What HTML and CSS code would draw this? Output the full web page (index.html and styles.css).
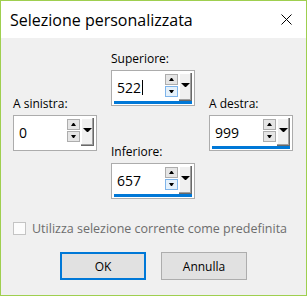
FILE: index.html
```html
<!DOCTYPE html>
<html lang="it">
<head>
    <meta charset="UTF-8">
    <title>Selezione personalizzata</title>
    <link rel="stylesheet" href="styles.css">
</head>
<body>
    <div class="dialog">
        <!-- Barra del titolo -->
        <div class="titlebar">
            <span class="title">Selezione personalizzata</span>
            <span class="close">
                <svg width="11" height="11" viewBox="0 0 11 11">
                    <path d="M0.5 0.5 L10.5 10.5 M10.5 0.5 L0.5 10.5" stroke="#000" stroke-width="1" fill="none"/>
                </svg>
            </span>
        </div>

        <div class="content">
            <div class="fields">
                <div class="col col-side">
                    <div class="field">
                        <label>A sinistra:</label>
                        <div class="spin">
                            <div class="spin-row">
                                <div class="value">0</div>
                                <div class="arrows">
                                    <span class="arrow-btn"><i class="tri-up"></i></span>
                                    <span class="arrow-btn"><i class="tri-down"></i></span>
                                </div>
                                <div class="drop"><i class="tri-drop"></i></div>
                            </div>
                            <div class="underline off"></div>
                        </div>
                    </div>
                </div>

                <div class="col col-mid">
                    <div class="field">
                        <label>Superiore:</label>
                        <div class="spin">
                            <div class="spin-row">
                                <div class="value">522<span class="caret"></span></div>
                                <div class="arrows">
                                    <span class="arrow-btn"><i class="tri-up"></i></span>
                                    <span class="arrow-btn hot"><i class="tri-down"></i></span>
                                </div>
                                <div class="drop"><i class="tri-drop"></i></div>
                            </div>
                            <div class="underline"></div>
                        </div>
                    </div>
                    <div class="field">
                        <label>Inferiore:</label>
                        <div class="spin">
                            <div class="spin-row">
                                <div class="value">657</div>
                                <div class="arrows">
                                    <span class="arrow-btn"><i class="tri-up"></i></span>
                                    <span class="arrow-btn hot"><i class="tri-down"></i></span>
                                </div>
                                <div class="drop"><i class="tri-drop"></i></div>
                            </div>
                            <div class="underline"></div>
                        </div>
                    </div>
                </div>

                <div class="col col-side">
                    <div class="field">
                        <label>A destra:</label>
                        <div class="spin">
                            <div class="spin-row">
                                <div class="value">999</div>
                                <div class="arrows">
                                    <span class="arrow-btn"><i class="tri-up"></i></span>
                                    <span class="arrow-btn"><i class="tri-down"></i></span>
                                </div>
                                <div class="drop"><i class="tri-drop"></i></div>
                            </div>
                            <div class="underline"></div>
                        </div>
                    </div>
                </div>
            </div>

            <div class="check">
                <span class="check-box"></span>
                <span>Utilizza selezione corrente come predefinita</span>
            </div>

            <div class="actions">
                <button class="btn btn-default">OK</button>
                <button class="btn">Annulla</button>
            </div>
        </div>
    </div>
</body>
</html>
```
FILE: styles.css
```css
body {
    margin: 0;
    font-family: "Open Sans", "Noto Sans", sans-serif;
    color: #000;
}

.dialog {
    width: 307px;
    height: 296px;
    box-sizing: border-box;
    border: 1px solid #9fcf4f;
    background-color: #f0f0f0;
    display: flex;
    flex-direction: column;
}

.titlebar {
    height: 37px;
    background-color: #fff;
    display: flex;
    align-items: center;
    justify-content: space-between;
    padding: 0 14px 0 9px;
}

.title {
    font-size: 16px;
    line-height: 20px;
}

.close {
    display: flex;
}

.content {
    padding: 13px 12px 0 12px;
}

.fields {
    display: flex;
    gap: 14px;
}

.col {
    display: flex;
    flex-direction: column;
}

.col-side {
    margin-top: 45px;
}

.col-mid {
    gap: 38px;
}

.field label {
    display: block;
    font-size: 12px;
    line-height: 16px;
    margin-bottom: 3px;
}

.spin {
    width: 84px;
    height: 36px;
    box-sizing: border-box;
    border: 1px solid #acacac;
    background-color: #fff;
    padding: 2px 2px 1px 2px;
    display: flex;
    flex-direction: column;
}

.spin-row {
    flex: 1;
    display: flex;
    gap: 1px;
}

.value {
    flex: 1;
    display: flex;
    align-items: center;
    padding-left: 3px;
    font-size: 14px;
}

.caret {
    display: inline-block;
    width: 1px;
    height: 15px;
    background-color: #000;
    margin-left: 1px;
}

.arrows {
    width: 13px;
    display: flex;
    flex-direction: column;
    gap: 1px;
    padding-top: 1px;
}

.arrow-btn {
    height: 11px;
    box-sizing: border-box;
    border: 1px solid #adadad;
    background-color: #e5e5e5;
    display: flex;
    align-items: center;
    justify-content: center;
}

.arrow-btn.hot {
    border-color: #7eb4ea;
    background-color: #e5f1fb;
}

.tri-up {
    width: 1px;
    border-left: 2px solid transparent;
    border-right: 2px solid transparent;
    border-bottom: 3px solid #000;
}

.tri-down {
    width: 1px;
    border-left: 2px solid transparent;
    border-right: 2px solid transparent;
    border-top: 3px solid #000;
}

.drop {
    width: 13px;
    box-sizing: border-box;
    background-color: #f0f0f0;
    border-right: 1px solid #696969;
    border-bottom: 1px solid #696969;
    box-shadow: inset -1px -1px 0 #a0a0a0, inset 1px 1px 0 #fff;
    display: flex;
    justify-content: center;
    align-items: flex-start;
    padding-top: 10px;
}

.tri-drop {
    width: 1px;
    border-left: 4px solid transparent;
    border-right: 4px solid transparent;
    border-top: 4px solid #000;
}

.underline {
    height: 3px;
    background-color: #0078d7;
}

.underline.off {
    background-color: transparent;
}

.check {
    display: flex;
    align-items: center;
    gap: 6px;
    margin-top: 21px;
    height: 16px;
    font-size: 12.5px;
    color: #6d6d6d;
}

.check-box {
    width: 13px;
    height: 13px;
    box-sizing: border-box;
    border: 1px solid #c4c4c4;
    background-color: #fcfcfc;
}

.actions {
    display: flex;
    justify-content: center;
    gap: 15px;
    margin-top: 16px;
}

.btn {
    width: 86px;
    height: 28px;
    box-sizing: border-box;
    border: 1px solid #adadad;
    background-color: #e1e1e1;
    font-family: "Open Sans", "Noto Sans", sans-serif;
    font-size: 12px;
    color: #000;
    padding: 0;
}

.btn-default {
    border: 2px solid #0078d7;
}
```
